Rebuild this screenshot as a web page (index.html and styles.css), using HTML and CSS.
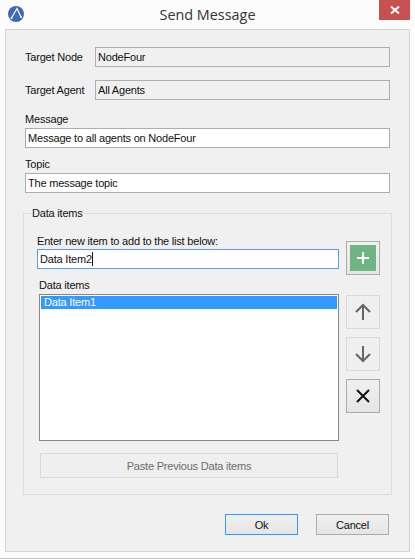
FILE: index.html

```html
<html>
<head>
  <title>Send Message</title>
  <link rel="stylesheet" href="styles.css">
</head>
<body>
  <div class="window">
    <div class="titlebar">
      <svg class="logo" width="16" height="16" viewBox="0 0 16 16">
        <circle cx="8" cy="8" r="8" fill="#4068b4"/>
        <path d="M3.5 12 L9 2.5 L13 11" fill="none" stroke="#fff" stroke-width="1.2"/>
        <circle cx="3.5" cy="12" r="1" fill="#fff"/>
        <circle cx="13" cy="11" r="1" fill="#fff"/>
      </svg>
      <div class="title">Send Message</div>
      <div class="close">
        <svg width="10" height="8" viewBox="0 0 10 8">
          <path d="M1 0.5 L9 7.5 M9 0.5 L1 7.5" stroke="#fff" stroke-width="2"/>
        </svg>
      </div>
    </div>

    <div class="panel">
      <div class="target-row">
        <label>Target Node</label>
        <input type="text" class="readonly" value="NodeFour" readonly>
      </div>
      <div class="target-row second">
        <label>Target Agent</label>
        <input type="text" class="readonly" value="All Agents" readonly>
      </div>

      <label class="message-label">Message</label>
      <input type="text" value="Message to all agents on NodeFour">
      <label class="topic-label">Topic</label>
      <input type="text" value="The message topic">

      <fieldset class="data-group">
        <legend>Data items</legend>
        <div class="data-left">
          <label>Enter new item to add to the list below:</label>
          <div class="new-item">
            <input type="text" class="focused" value="Data Item2">
            <span class="caret"></span>
          </div>
          <label class="list-label">Data items</label>
          <div class="listbox">
            <div class="list-item">Data Item1</div>
          </div>
          <button class="paste">Paste Previous Data items</button>
        </div>
        <div class="data-right">
          <button class="icon-btn add">
            <span class="add-square">
              <svg width="14" height="14" viewBox="0 0 14 14">
                <path d="M7 1 V13 M1 7 H13" stroke="#fff" stroke-width="2"/>
              </svg>
            </span>
          </button>
          <button class="icon-btn off up">
            <svg width="18" height="18" viewBox="0 0 18 18">
              <path d="M9 17 V2 M2 9 L9 2 L16 9" fill="none" stroke="#666" stroke-width="2"/>
            </svg>
          </button>
          <button class="icon-btn off">
            <svg width="18" height="18" viewBox="0 0 18 18">
              <path d="M9 1 V16 M2 9 L9 16 L16 9" fill="none" stroke="#666" stroke-width="2"/>
            </svg>
          </button>
          <button class="icon-btn">
            <svg width="16" height="16" viewBox="0 0 16 16">
              <path d="M2 2 L14 14 M14 2 L2 14" stroke="#111" stroke-width="2"/>
            </svg>
          </button>
        </div>
      </fieldset>

      <div class="actions">
        <button class="action default">Ok</button>
        <button class="action">Cancel</button>
      </div>
    </div>
  </div>
</body>
</html>
```

FILE: styles.css

```css
* {
  box-sizing: border-box;
}

body {
  margin: 0;
  background-color: #fcfcfc;
  font-family: "Liberation Sans", Arial, sans-serif;
  font-size: 11px;
  letter-spacing: -0.2px;
  color: #111;
}

.window {
  height: 559px;
  border-bottom: 1px solid #c4c4c4;
}

.titlebar {
  height: 29px;
  position: relative;
  display: flex;
  justify-content: center;
}

.logo {
  position: absolute;
  left: 8px;
  top: 6px;
}

.title {
  font-family: "Open Sans", Arial, sans-serif;
  font-size: 14.4px;
  letter-spacing: 0;
  line-height: 29px;
  color: #333;
}

.close {
  position: absolute;
  left: 379px;
  top: 0;
  width: 31px;
  height: 20px;
  background-color: #c75050;
  display: flex;
  align-items: center;
  justify-content: center;
}

.panel {
  margin: 0 5px;
  height: 523px;
  padding: 17px 19px 0;
  background-color: #f0f0f0;
  border: 1px solid #d4d4d4;
}

label {
  display: block;
  height: 16px;
  line-height: 16px;
  white-space: nowrap;
}

input {
  display: block;
  width: 100%;
  height: 20px;
  padding: 0 2px;
  border: 1px solid #abadb3;
  background-color: #fff;
  font-family: inherit;
  font-size: inherit;
  letter-spacing: inherit;
  color: #111;
  outline: none;
}

.readonly {
  background-color: #f0f0f0;
}

.focused {
  border-color: #569de5;
}

.new-item {
  position: relative;
}

.caret {
  position: absolute;
  left: 55px;
  top: 3px;
  width: 1px;
  height: 14px;
  background-color: #111;
}

.target-row {
  display: flex;
  align-items: center;
}

.target-row label {
  width: 70px;
  flex: none;
}

.second {
  margin-top: 13px;
  margin-bottom: 11px;
}

.message-label {
  margin-bottom: 1px;
}

.topic-label {
  margin-top: 8px;
  margin-bottom: 1px;
}

.data-group {
  margin: 12px -2px 0;
  padding: 12px 0 16px 13px;
  border: 1px solid #dcdcdc;
  display: flex;
  gap: 7px;
}

.data-group legend {
  margin-left: -6px;
  padding: 0 1px;
  line-height: 16px;
}

.data-left {
  width: 302px;
}

.list-label {
  margin-top: 8px;
  margin-left: 2px;
  margin-bottom: 1px;
}

.listbox {
  margin-left: 2px;
  height: 147px;
  padding: 1px;
  background-color: #fff;
  border: 1px solid #828790;
}

.list-item {
  height: 13px;
  line-height: 13px;
  padding-left: 3px;
  background-color: #3399ff;
  color: #fff;
}

button {
  font-family: inherit;
  font-size: inherit;
  letter-spacing: inherit;
  color: #111;
  padding: 0;
}

.paste {
  display: block;
  width: 298px;
  height: 25px;
  margin: 12px 0 0 3px;
  background-color: #efefef;
  border: 1px solid #d9d9d9;
  color: #6d6d6d;
}

.data-right {
  margin-top: 8px;
  width: 34px;
  display: flex;
  flex-direction: column;
  gap: 8px;
}

.icon-btn {
  width: 34px;
  height: 34px;
  flex: none;
  display: flex;
  align-items: center;
  justify-content: center;
  background: linear-gradient(#f0f0f0, #e5e5e5);
  border: 1px solid #acacac;
}

.add {
  margin-bottom: 12px;
}

.add-square {
  width: 26px;
  height: 26px;
  background-color: #6eb583;
  display: flex;
  align-items: center;
  justify-content: center;
}

.off {
  background: #efefef;
  border-color: #d9d9d9;
}

.actions {
  margin-top: 19px;
  margin-right: 1px;
  display: flex;
  justify-content: flex-end;
  gap: 18px;
}

.action {
  width: 73px;
  height: 21px;
  background: linear-gradient(#f0f0f0, #e5e5e5);
  border: 1px solid #acacac;
}

.default {
  border-color: #3399ff;
}
```
